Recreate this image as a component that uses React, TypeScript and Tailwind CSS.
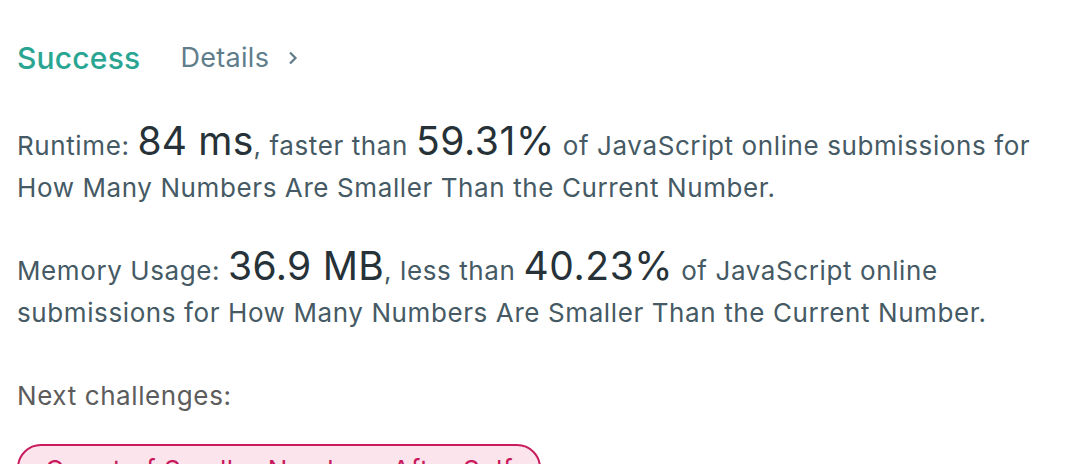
export default function App() {
  return (
    <div
      className="w-[1088px] h-[464px] overflow-hidden bg-white pl-[17px] pt-[36px]"
      style={{ fontFamily: 'Inter, "Noto Sans", sans-serif' }}
    >
      <div className="flex items-center h-[44px]">
        <span className="text-[30px] text-[#2aa592] font-medium leading-[44px] tracking-[0.2px]">Success</span>
        <span className="ml-[40px] text-[27px] text-[#607d8b] leading-[44px] tracking-[0.3px]">Details</span>
        <svg className="ml-[18px]" width="12" height="16" viewBox="0 0 12 16">
          <path d="M3 2.5 L8.5 8 L3 13.5" fill="none" stroke="#607d8b" strokeWidth="2.2" />
        </svg>
      </div>
      <div className="mt-[40px] text-[26px] leading-[42px] text-[#455a64] w-[1050px] tracking-[0.6px]">
        Runtime: <span className="text-[39px] text-[#263238] leading-[42px] tracking-[0.2px]">84 ms</span>, faster than{' '}
        <span className="text-[39px] text-[#263238] leading-[42px] tracking-[0.6px]">59.31%</span> of JavaScript online submissions for How Many
        Numbers Are Smaller Than the Current Number.
      </div>
      <div className="mt-[36px] text-[26px] leading-[42px] text-[#455a64] w-[1050px] tracking-[0.6px]">
        Memory Usage: <span className="text-[39px] text-[#263238] leading-[42px] tracking-[0.3px]">36.9 MB</span>, less than{' '}
        <span className="text-[39px] text-[#263238] leading-[42px] tracking-[0.6px]">40.23%</span> of JavaScript online submissions for How Many
        Numbers Are Smaller Than the Current Number.
      </div>
      <div className="mt-[41px] text-[26px] leading-[42px] text-[#5c5c5c] tracking-[0.6px]">Next challenges:</div>
      <div className="mt-[27px] inline-flex h-[48px] items-start rounded-[24px] border-2 border-[#c81a5c] bg-[#fce4ec] px-[26px] pt-[8px] text-[26px] leading-[32px] text-[#c81a5c] tracking-[0.6px]">
        Count of Smaller Numbers After Self
      </div>
    </div>
  );
}
